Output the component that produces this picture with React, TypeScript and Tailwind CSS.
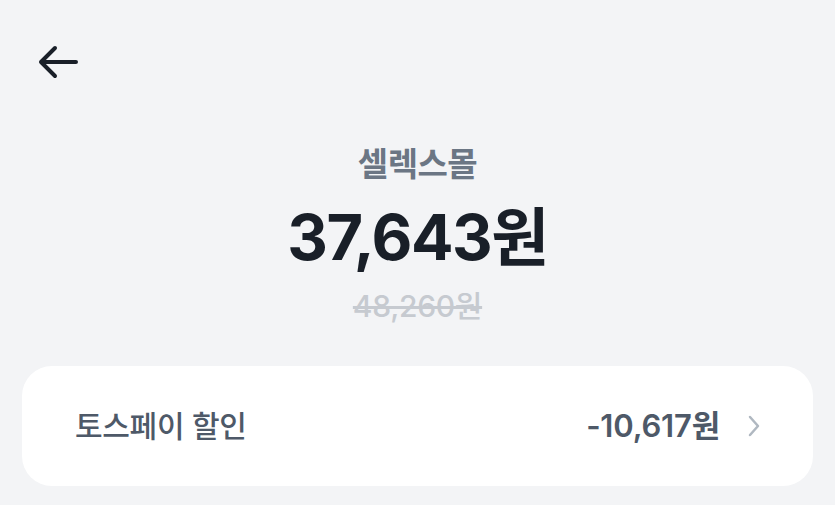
import React from 'react';

const font = { fontFamily: 'Inter, "Noto Sans CJK KR", "Noto Sans", sans-serif' };

const BackArrow: React.FC = () => (
  <svg width="44" height="36" viewBox="0 0 44 36" fill="none">
    <path d="M40 18H5M19 4L5 18l14 14" stroke="#191f28" strokeWidth="4" strokeLinecap="round" strokeLinejoin="round" />
  </svg>
);

const App: React.FC = () => {
  return (
    <div className="w-[835px] h-[505px] overflow-hidden bg-[#f3f4f6] flex flex-col" style={font}>
      <div className="h-[140px] pl-[36px] pt-[44px]">
        <BackArrow />
      </div>
      <div className="flex flex-col items-center">
        <div className="text-[33px] font-semibold text-[#6b7684] leading-[48px] tracking-[-0.5px]">셀렉스몰</div>
        <div className="mt-[13px] text-[63px] font-bold text-[#191f28] leading-[72px] tracking-[-1.5px]">37,643원</div>
        <div className="mt-[13px] text-[30px] font-medium text-[#c6cad0] leading-[40px] line-through tracking-[-0.3px]">48,260원</div>
      </div>
      <div className="mt-[40px] mx-[22px] h-[120px] bg-white rounded-[30px] flex items-center justify-between pl-[53px] pr-[52px]">
        <span className="text-[30px] font-medium text-[#4e5968] tracking-[-0.3px]">토스페이 할인</span>
        <div className="flex items-center gap-[27px]">
          <span className="text-[31px] font-semibold text-[#4e5968] tracking-[-0.2px]">-10,617원</span>
          <svg width="14" height="22" viewBox="0 0 14 22" fill="none">
            <path d="M3 2l8 9-8 9" stroke="#b0b8c1" strokeWidth="2.5" strokeLinecap="round" strokeLinejoin="round" />
          </svg>
        </div>
      </div>
    </div>
  );
};

export default App;
